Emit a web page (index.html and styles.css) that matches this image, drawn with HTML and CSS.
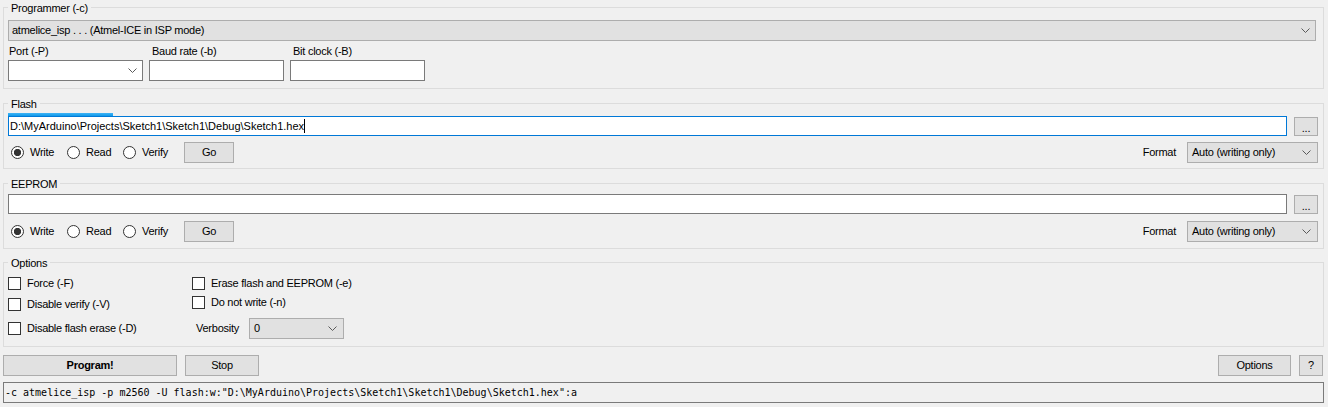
FILE: index.html
```html
<!DOCTYPE html>
<html lang="en">
<head>
<meta charset="utf-8">
<title>AVRDUDE</title>
<link rel="stylesheet" href="styles.css">
</head>
<body>
<div class="app">
  <fieldset class="group g-prog">
    <legend>Programmer (-c)</legend>
    <div class="combo combo-ro combo-prog">
      <span class="combo-text">atmelice_isp . . . (Atmel-ICE in ISP mode)</span>
      <svg class="chev" width="9" height="5" viewBox="0 0 9 5"><polyline points="0.5,0.5 4.5,4.5 8.5,0.5" fill="none" stroke="#5a5a5a" stroke-width="1"/></svg>
    </div>
    <div class="fields">
      <div class="field">
        <label class="field-label">Port (-P)</label>
        <div class="combo combo-edit">
          <span class="combo-text"></span>
          <svg class="chev" width="9" height="5" viewBox="0 0 9 5"><polyline points="0.5,0.5 4.5,4.5 8.5,0.5" fill="none" stroke="#5a5a5a" stroke-width="1"/></svg>
        </div>
      </div>
      <div class="field">
        <label class="field-label field-label-tb">Baud rate (-b)</label>
        <div class="textbox"></div>
      </div>
      <div class="field">
        <label class="field-label field-label-tb">Bit clock (-B)</label>
        <div class="textbox"></div>
      </div>
    </div>
  </fieldset>

  <fieldset class="group g-mem g-flash">
    <legend>Flash</legend>
    <div class="progress"><div class="progress-fill" style="width:105px"></div></div>
    <div class="file-row">
      <div class="textbox textbox-file focused"><span class="tb-text">D:\MyArduino\Projects\Sketch1\Sketch1\Debug\Sketch1.hex</span><span class="caret"></span></div>
      <div class="btn btn-browse">...</div>
    </div>
    <div class="op-row">
      <div class="radio-item"><span class="radio checked"></span><span>Write</span></div>
      <div class="radio-item"><span class="radio"></span><span>Read</span></div>
      <div class="radio-item"><span class="radio"></span><span>Verify</span></div>
      <div class="btn btn-go">Go</div>
      <div class="format">
        <span class="format-label">Format</span>
        <div class="combo combo-ro combo-format">
          <span class="combo-text">Auto (writing only)</span>
          <svg class="chev" width="9" height="5" viewBox="0 0 9 5"><polyline points="0.5,0.5 4.5,4.5 8.5,0.5" fill="none" stroke="#5a5a5a" stroke-width="1"/></svg>
        </div>
      </div>
    </div>
  </fieldset>

  <fieldset class="group g-mem g-eeprom">
    <legend>EEPROM</legend>
    <div class="file-row">
      <div class="textbox textbox-file"></div>
      <div class="btn btn-browse">...</div>
    </div>
    <div class="op-row">
      <div class="radio-item"><span class="radio checked"></span><span>Write</span></div>
      <div class="radio-item"><span class="radio"></span><span>Read</span></div>
      <div class="radio-item"><span class="radio"></span><span>Verify</span></div>
      <div class="btn btn-go">Go</div>
      <div class="format">
        <span class="format-label">Format</span>
        <div class="combo combo-ro combo-format">
          <span class="combo-text">Auto (writing only)</span>
          <svg class="chev" width="9" height="5" viewBox="0 0 9 5"><polyline points="0.5,0.5 4.5,4.5 8.5,0.5" fill="none" stroke="#5a5a5a" stroke-width="1"/></svg>
        </div>
      </div>
    </div>
  </fieldset>

  <fieldset class="group g-options">
    <legend>Options</legend>
    <div class="opt-cols">
      <div class="opt-col opt-left">
        <div class="check-item"><span class="check"></span><span>Force (-F)</span></div>
        <div class="check-item ci-2"><span class="check"></span><span>Disable verify (-V)</span></div>
        <div class="check-item ci-3"><span class="check"></span><span>Disable flash erase (-D)</span></div>
      </div>
      <div class="opt-col opt-right">
        <div class="check-item"><span class="check"></span><span>Erase flash and EEPROM (-e)</span></div>
        <div class="check-item ci-2r"><span class="check"></span><span>Do not write (-n)</span></div>
        <div class="verb-row">
          <span class="verb-label">Verbosity</span>
          <div class="combo combo-ro combo-verb">
            <span class="combo-text">0</span>
            <svg class="chev" width="9" height="5" viewBox="0 0 9 5"><polyline points="0.5,0.5 4.5,4.5 8.5,0.5" fill="none" stroke="#5a5a5a" stroke-width="1"/></svg>
          </div>
        </div>
      </div>
    </div>
  </fieldset>

  <div class="action-row">
    <div class="btn btn-program">Program!</div>
    <div class="btn btn-stop">Stop</div>
    <div class="spacer"></div>
    <div class="btn btn-options">Options</div>
    <div class="btn btn-help">?</div>
  </div>

  <div class="cmdline">-c atmelice_isp -p m2560 -U flash:w:"D:\MyArduino\Projects\Sketch1\Sketch1\Debug\Sketch1.hex":a</div>
</div>
</body>
</html>
```

FILE: styles.css
```css
* {
  box-sizing: border-box;
}

html, body {
  margin: 0;
  padding: 0;
  background: #f0f0f0;
}

body {
  font-family: "Liberation Sans", Arial, sans-serif;
  font-size: 11px;
  line-height: 13px;
  letter-spacing: -0.25px;
  color: #000;
  width: 1328px;
  height: 407px;
  overflow: hidden;
}

.app {
  padding: 0 4px 0 3px;
}

/* group boxes */
.group {
  margin: 0;
  border: 1px solid #dcdcdc;
  padding: 0 7px 7px 4px;
  min-width: 0;
}

.group legend {
  padding: 3px 3px 0 3px;
  line-height: 13px;
}

.g-prog {
  margin-top: -1px;
}

.g-flash {
  margin-top: 6px;
  padding: 0 5px 5px 4px;
}

.g-eeprom {
  margin-top: 6px;
  padding: 0 5px 6px 4px;
}

.g-options {
  margin-top: 5px;
  padding: 0 5px 7px 4px;
}

/* combos */
.combo {
  height: 21px;
  display: flex;
  align-items: center;
  justify-content: space-between;
  padding: 0 5px 0 3px;
  border: 1px solid #adadad;
  background: #e1e1e1;
}

.combo-text {
  white-space: nowrap;
}

.chev {
  display: block;
  flex: none;
}

.combo-prog {
  margin-top: 5px;
}

.combo-edit {
  background: #fff;
  border-color: #7a7a7a;
  width: 135px;
}

.combo-format {
  width: 131px;
  padding-left: 4px;
  padding-right: 6px;
}

.combo-verb {
  width: 95px;
  padding-left: 4px;
  padding-right: 6px;
}

/* programmer fields */
.fields {
  display: flex;
  gap: 6px;
  margin-top: 4px;
}

.field {
  display: flex;
  flex-direction: column;
  width: 135px;
}

.field-label {
  display: block;
  height: 13px;
  margin-bottom: 2px;
  padding-left: 1px;
}

.field-label-tb {
  padding-left: 3px;
}

.textbox {
  height: 21px;
  background: #fff;
  border: 1px solid #7a7a7a;
}

/* flash / eeprom */
.progress {
  margin-top: 2px;
  height: 3px;
}

.progress-fill {
  height: 3px;
  background: linear-gradient(#3fb4f6, #0f98e8);
}

.file-row {
  display: flex;
  align-items: flex-start;
  gap: 7px;
}

.g-eeprom .file-row {
  margin-top: 3px;
}

.textbox-file {
  flex: 1;
  height: 20px;
  display: flex;
  align-items: center;
  padding-left: 1px;
  white-space: nowrap;
  letter-spacing: 0;
}

.textbox-file.focused {
  border-color: #0078d7;
}

.caret {
  display: inline-block;
  width: 1px;
  height: 14px;
  background: #000;
}

.btn {
  display: flex;
  align-items: center;
  justify-content: center;
  height: 21px;
  border: 1px solid #adadad;
  background: #e1e1e1;
  white-space: nowrap;
}

.btn-browse {
  width: 24px;
  height: 19px;
  margin-top: 1px;
  padding-top: 4px;
}

.op-row {
  display: flex;
  align-items: center;
  margin-top: 6px;
  height: 21px;
}

.g-eeprom .op-row {
  margin-top: 7px;
}

.radio-item {
  display: flex;
  align-items: center;
  gap: 6px;
  width: 56px;
}

.radio-item:first-child {
  margin-left: 3px;
}

.radio {
  width: 13px;
  height: 13px;
  border: 1px solid #333;
  border-radius: 50%;
  background: #fff;
  flex: none;
}

.radio.checked {
  background: radial-gradient(circle, #333 0, #333 3.3px, #fff 4px);
}

.btn-go {
  width: 50px;
  margin-left: 5px;
}

.format {
  margin-left: auto;
  display: flex;
  align-items: center;
  gap: 11px;
}

/* options */
.opt-cols {
  display: flex;
  margin-top: 5px;
}

.opt-col {
  display: flex;
  flex-direction: column;
}

.opt-left {
  width: 184px;
}

.check-item {
  display: flex;
  align-items: center;
  gap: 6px;
  height: 17px;
  white-space: nowrap;
}

.ci-2 {
  margin-top: 4px;
}

.ci-3 {
  margin-top: 7px;
}

.ci-2r {
  margin-top: 2px;
}

.check {
  width: 13px;
  height: 13px;
  border: 1px solid #333;
  background: #fff;
  flex: none;
}

.verb-row {
  display: flex;
  align-items: center;
  margin-top: 7px;
  padding-left: 4px;
}

.verb-label {
  width: 53px;
}

/* bottom */
.action-row {
  display: flex;
  gap: 8px;
  margin-top: 8px;
  padding-right: 1px;
}

.btn-program {
  width: 174px;
  font-weight: bold;
}

.btn-stop {
  width: 74px;
}

.spacer {
  flex: 1;
}

.btn-options {
  width: 73px;
}

.btn-help {
  width: 24px;
}

.cmdline {
  margin-top: 6px;
  height: 21px;
  border: 1px solid #7a7a7a;
  background: #f0f0f0;
  font-family: "DejaVu Sans Mono", "Liberation Mono", monospace;
  font-size: 10px;
  line-height: 19px;
  letter-spacing: 0;
  padding-left: 1px;
  white-space: nowrap;
  overflow: hidden;
}
```
